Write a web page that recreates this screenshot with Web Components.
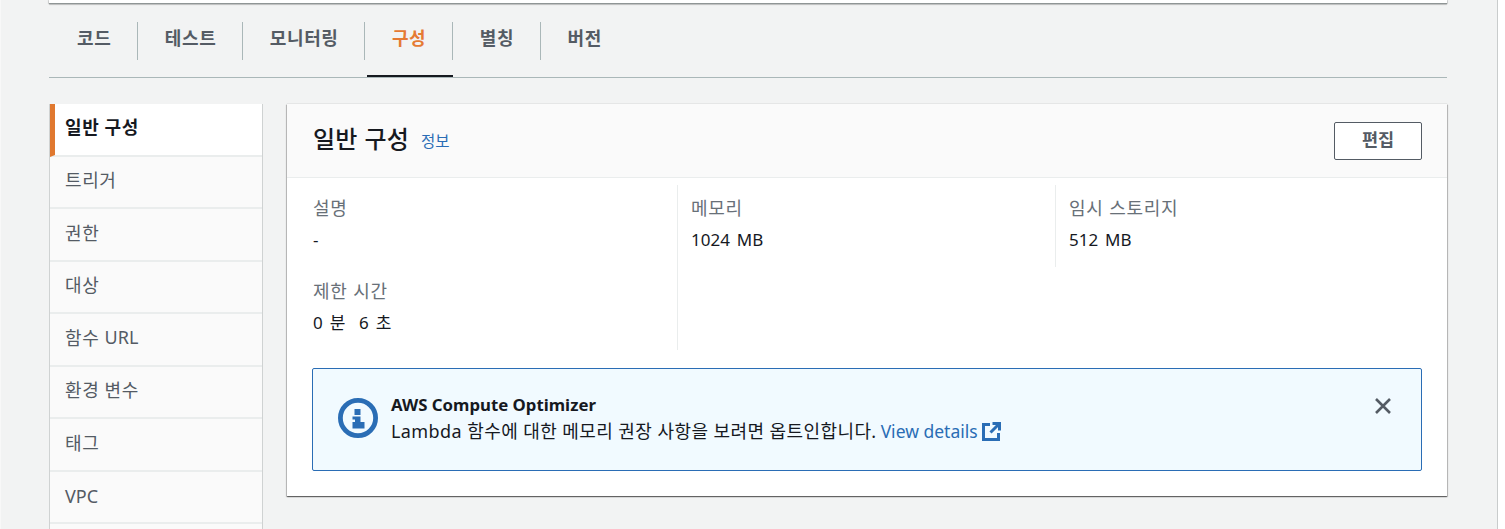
<!DOCTYPE html>
<html lang="ko">
<head>
<meta charset="utf-8">
<title>구성</title>
<style>
	html, body { margin: 0; height: 529px; overflow: hidden; background: #fff; }
	body { font-family: "Noto Sans", "Noto Sans CJK KR", sans-serif; color: #16191f; }
</style>
</head>
<body>

<template id="tab-bar-tpl">
	<style>
		:host { display: flex; margin-top: 18px; padding-left: 1px; border-bottom: 1px solid #aab7b8; height: 55px; }
	</style>
	<slot></slot>
</template>

<template id="tab-item-tpl">
	<style>
		:host { display: block; position: relative; height: 38px; }
		.label {
			display: flex; align-items: center; height: 30px; padding: 0 25.500px 8px 27px;
			border-right: 1px solid #aab7b8;
			font: 700 18px "Noto Sans CJK KR", sans-serif; letter-spacing: .6px; color: #545b64;
		}
		:host([last]) .label { border-right: 0; }
		:host([active]) .label { color: #e57a33; }
		:host([active])::after {
			content: ""; position: absolute; left: 2px; right: 0; top: 53px; height: 2px; background: #16191f;
		}
	</style>
	<div class="label"><slot></slot></div>
</template>

<template id="side-nav-tpl">
	<style>
		:host {
			display: block; width: 214px; flex: none; box-sizing: border-box; align-self: start;
			border-left: 1px solid #cfd2d2; border-right: 1px solid #cfd2d2;
			background: #fafafa;
		}
	</style>
	<slot></slot>
</template>

<template id="side-item-tpl">
	<style>
		:host {
			display: flex; align-items: center; box-sizing: border-box; height: 52.500px;
			padding: 0 0 5px 15px; border-bottom: 2px solid #eaeded;
			font: 400 18px "Noto Sans", "Noto Sans CJK KR", sans-serif; letter-spacing: .6px; color: #545b64;
			white-space: pre;
		}
		:host([active]) {
			background: #fff; color: #16191f; font-weight: 700;
			padding: 0 0 7px 10px; border-left: 5px solid #e0782f;
		}
		:host([latin]) { padding-bottom: 1px; letter-spacing: 0; }
		::slotted(span) { letter-spacing: 0; }
	</style>
	<slot></slot>
</template>

<template id="config-card-tpl">
	<style>
		:host {
			display: block; flex: none; width: 1160px; background: #fff; box-sizing: border-box; height: 392px;
			box-shadow: 0 0 1px 0 rgba(0,0,0,.3), 0 1px 1px 0 rgba(0,0,0,.4), 1px 1px 1px 0 rgba(0,0,0,.15), -1px 1px 1px 0 rgba(0,0,0,.15);
		}
		header {
			display: flex; align-items: center; justify-content: space-between;
			box-sizing: border-box; height: 74px; padding: 0 25px 0 26px;
			background: #fafafa; border-bottom: 1px solid #eaeded;
		}
		h2 { margin: 0; font: 500 24px "Noto Sans CJK KR", sans-serif; color: #16191f; letter-spacing: .2px; }
		.title { display: flex; align-items: center; gap: 12px; padding-bottom: 6px; }
		.info { font: 400 15.500px "Noto Sans CJK KR", sans-serif; color: #2a6db5; padding-top: 5px; }
		button {
			box-sizing: border-box; width: 88px; height: 38px; padding: 0 0 4px; background: #fff;
			border: 1px solid #545b64; border-radius: 2px;
			font: 700 17.500px "Noto Sans CJK KR", sans-serif; color: #545b64;
		}
		.columns { display: flex; padding-top: 7px; height: 165px; }
		::slotted(info-alert) { margin: 18px 25px 0; }
	</style>
	<header>
		<div class="title"><h2>일반 구성</h2><span class="info">정보</span></div>
		<button>편집</button>
	</header>
	<div class="columns"><slot name="columns"></slot></div>
	<slot></slot>
</template>

<template id="kv-column-tpl">
	<style>
		:host { display: block; box-sizing: border-box; width: 378px; padding-left: 13px; align-self: flex-start; height: 82px; }
		:host([first]) { width: 391px; padding-left: 26px; height: 165px; border-right: 1px solid #eaeded; }
		:host([second]) { border-right: 1px solid #eaeded; }
		:host([last]) { width: auto; }
	</style>
	<slot></slot>
</template>

<template id="kv-pair-tpl">
	<style>
		:host { display: block; height: 83px; }
		.k { font: 400 18px/24px "Noto Sans CJK KR", sans-serif; letter-spacing: .7px; color: #687078; padding-top: 10px; }
		.v { font: 400 17px/24px "Noto Sans", "Noto Sans CJK KR", sans-serif; word-spacing: 2.500px; color: #16191f; margin-top: 9px; white-space: pre; }
	</style>
	<div class="k"><slot name="k"></slot></div>
	<div class="v"><slot></slot></div>
</template>

<template id="info-alert-tpl">
	<style>
		:host {
			display: flex; box-sizing: border-box; height: 103px; padding: 29px 29px 0 25px;
			border: 1px solid #2a6db5; border-radius: 2px; background: #f1faff;
		}
		.icon { width: 40px; height: 40px; flex: none; }
		.body { flex: 1; padding-left: 13px; margin-top: -6px; }
		.t { font: 700 16.800px/26px "Noto Sans", "Noto Sans CJK KR", sans-serif; color: #16191f; }
		.m { font: 400 18px/26px "Noto Sans", "Noto Sans CJK KR", sans-serif; letter-spacing: .42px; color: #16191f; display: flex; align-items: center; white-space: nowrap; }
		a { color: #2a6db5; text-decoration: none; margin-left: 4px; font-size: 17.500px; letter-spacing: 0; }
		.ext { width: 20px; height: 20px; margin-left: 4px; }
		.close { width: 20px; height: 20px; flex: none; margin-top: -2px; margin-right: -1px; }
	</style>
	<svg class="icon" viewBox="0 0 40 40">
		<circle cx="20" cy="20" r="17.600" fill="none" stroke="#2a6db5" stroke-width="4.800"/>
		<path fill="#2a6db5" d="M16.500 11h6v6h-6zM14.500 18.500h8V24h4v6.500h-12V24h2.500v-2.500h-2.500z"/>
	</svg>
	<div class="body">
		<div class="t"><slot name="title"></slot></div>
		<div class="m"><slot></slot><a href="#"><slot name="link"></slot></a>
			<svg class="ext" viewBox="0 0 20 20" fill="none" stroke="#2a6db5" stroke-width="3">
				<path d="M8 3.500H1.500v15h15V12M10.500 2.500h7v7M17 3 8.500 11.500"/>
			</svg>
		</div>
	</div>
	<svg class="close" viewBox="0 0 20 20" fill="none" stroke="#545b64" stroke-width="2.600">
		<path d="M3 3l14 14M17 3 3 17"/>
	</svg>
</template>

<template id="page-shell-tpl">
	<style>
		:host {
			display: block; box-sizing: border-box; width: 1498px; height: 529px; overflow: hidden;
			padding: 0 50px 0 48px; background: #f2f3f3;
			border-left: 1px solid #f8f8f8; border-right: 1px solid #c9cccc;
		}
		.stub { height: 3px; background: #fff; border-bottom: 1px solid #8f9595; box-shadow: 0 1px 1px rgba(0,0,0,.2), -1px 0 1px rgba(0,0,0,.15), 1px 0 1px rgba(0,0,0,.15); }
		.content { display: flex; gap: 24px; margin-top: 26px; }
	</style>
	<div class="stub"></div>
	<slot name="tabs"></slot>
	<div class="content"><slot></slot></div>
</template>

<page-shell>
	<tab-bar slot="tabs">
		<tab-item>코드</tab-item>
		<tab-item>테스트</tab-item>
		<tab-item>모니터링</tab-item>
		<tab-item active>구성</tab-item>
		<tab-item>별칭</tab-item>
		<tab-item last>버전</tab-item>
	</tab-bar>
	<side-nav>
		<side-item active>일반 구성</side-item>
		<side-item>트리거</side-item>
		<side-item>권한</side-item>
		<side-item>대상</side-item>
		<side-item>함수 <span>URL</span></side-item>
		<side-item>환경 변수</side-item>
		<side-item>태그</side-item>
		<side-item latin>VPC</side-item>
		<side-item></side-item>
	</side-nav>
	<config-card>
		<kv-column slot="columns" first>
			<kv-pair><span slot="k">설명</span>-</kv-pair>
			<kv-pair><span slot="k">제한 시간</span>0 분  6 초</kv-pair>
		</kv-column>
		<kv-column slot="columns" second>
			<kv-pair><span slot="k">메모리</span>1024 MB</kv-pair>
		</kv-column>
		<kv-column slot="columns" last>
			<kv-pair><span slot="k">임시 스토리지</span>512 MB</kv-pair>
		</kv-column>
		<info-alert><span slot="title">AWS Compute Optimizer</span>Lambda 함수에 대한 메모리 권장 사항을 보려면 옵트인합니다.<span slot="link">View details</span></info-alert>
	</config-card>
</page-shell>

<script>
	const simple = (name, tpl) => {
		customElements.define(name, class extends HTMLElement {
			constructor() {
				super();
				this.attachShadow({ mode: 'open' }).appendChild(document.getElementById(tpl).content.cloneNode(true));
			}
		});
	};
	simple('page-shell', 'page-shell-tpl');
	simple('tab-bar', 'tab-bar-tpl');
	simple('tab-item', 'tab-item-tpl');
	simple('side-nav', 'side-nav-tpl');
	simple('side-item', 'side-item-tpl');
	simple('config-card', 'config-card-tpl');
	simple('kv-column', 'kv-column-tpl');
	simple('kv-pair', 'kv-pair-tpl');
	simple('info-alert', 'info-alert-tpl');
</script>
</body>
</html>
